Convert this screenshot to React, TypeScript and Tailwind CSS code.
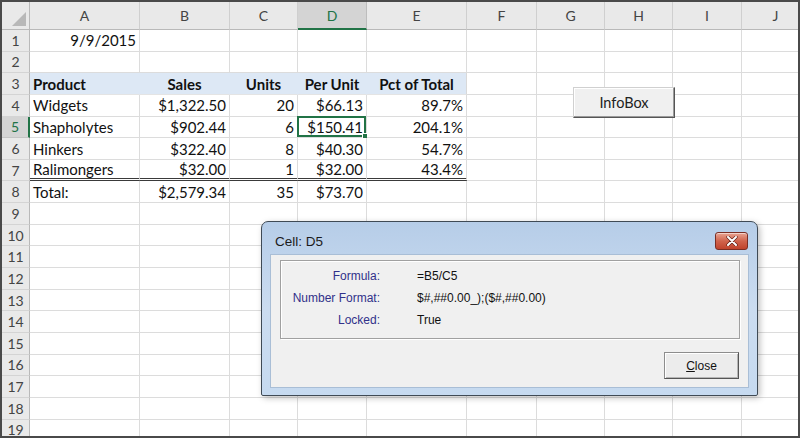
import React from "react";

type Cell = { t: string; right?: boolean; center?: boolean; bold?: boolean };

const cols = ["A", "B", "C", "D", "E", "F", "G", "H", "I", "J"];

const data: Record<number, Record<string, Cell>> = {
  1: { A: { t: "9/9/2015", right: true } },
  3: {
    A: { t: "Product", bold: true },
    B: { t: "Sales", bold: true, center: true },
    C: { t: "Units", bold: true, center: true },
    D: { t: "Per Unit", bold: true, center: true },
    E: { t: "Pct of Total", bold: true, center: true },
  },
  4: {
    A: { t: "Widgets" },
    B: { t: "$1,322.50", right: true },
    C: { t: "20", right: true },
    D: { t: "$66.13", right: true },
    E: { t: "89.7%", right: true },
  },
  5: {
    A: { t: "Shapholytes" },
    B: { t: "$902.44", right: true },
    C: { t: "6", right: true },
    D: { t: "$150.41", right: true },
    E: { t: "204.1%", right: true },
  },
  6: {
    A: { t: "Hinkers" },
    B: { t: "$322.40", right: true },
    C: { t: "8", right: true },
    D: { t: "$40.30", right: true },
    E: { t: "54.7%", right: true },
  },
  7: {
    A: { t: "Ralimongers" },
    B: { t: "$32.00", right: true },
    C: { t: "1", right: true },
    D: { t: "$32.00", right: true },
    E: { t: "43.4%", right: true },
  },
  8: {
    A: { t: "Total:" },
    B: { t: "$2,579.34", right: true },
    C: { t: "35", right: true },
    D: { t: "$73.70", right: true },
  },
};

const rows = Array.from({ length: 19 }, (_, i) => i + 1);
const tableCols = ["A", "B", "C", "D", "E"];

function DataCell({ row, col }: { row: number; col: string }) {
  const c = data[row]?.[col];
  const inTable = tableCols.includes(col);
  const blue = row === 3 && inTable;
  const double = row === 7 && inTable;
  const selected = row === 5 && col === "D";

  let cls = "relative flex items-center px-[3px] border-r border-b whitespace-nowrap overflow-visible ";
  if (blue) {
    cls += "bg-[#dde8f5] " + (col === "E" ? "border-r-[#d9d9d9] border-b-[#e4e4e4] " : "border-r-[#dde8f5] border-b-[#e4e4e4] ");
  } else {
    cls += "bg-white border-[#dcdcdc] ";
  }
  if (double) cls += "border-b-[3px] border-b-[#3a3a3a] [border-bottom-style:double] ";
  if (c?.right) cls += "justify-end ";
  if (c?.center) cls += "justify-center ";
  if (c?.bold) cls += "font-bold ";

  return (
    <div className={cls}>
      {c && <span className="text-[15px] leading-none text-[#111] pt-[1px]">{c.t}</span>}
      {selected && (
        <div className="absolute -left-[1px] -top-[1px] right-0 bottom-0 border-2 border-[#217346] pointer-events-none">
          <div className="absolute -right-[4px] -bottom-[4px] w-[6px] h-[6px] bg-[#217346] border border-white" />
        </div>
      )}
    </div>
  );
}

function Dialog() {
  return (
    <div className="absolute left-[259px] top-[219px] w-[497px] h-[175px] rounded-t-[7px] rounded-b-[2px] border border-[#3f4a55] bg-gradient-to-b from-[#b6cde8] via-[#cbdcf0] to-[#c6daf0] shadow-[2px_2px_6px_rgba(0,0,0,0.25)] font-['Liberation_Sans',sans-serif]">
      <div className="h-[32px] flex items-start justify-between pl-[13px] pr-[9px]">
        <span className="mt-[10px] text-[13.5px] text-[#1b1b1b]">Cell: D5</span>
        <div className="mt-[10px] w-[33px] h-[18px] rounded-[3px] border border-[#7a2e24] bg-gradient-to-b from-[#e8a493] via-[#d0634c] to-[#c0432c] flex items-center justify-center shadow-[inset_0_1px_0_rgba(255,255,255,0.5)]">
          <svg width="12" height="10" viewBox="0 0 12 10">
            <path d="M2 1 L10 9 M10 1 L2 9" stroke="#5a1a12" strokeWidth="3.2" strokeLinecap="round" />
            <path d="M2 1 L10 9 M10 1 L2 9" stroke="#ffffff" strokeWidth="2" strokeLinecap="round" />
          </svg>
        </div>
      </div>
      <div className="mx-[8px] h-[134px] bg-[#f0f0f0] border border-[#a9bed6] flex flex-col">
        <div className="ml-[9px] mt-[5px] w-[460px] h-[79px] border border-[#a0a0a0] shadow-[inset_1px_1px_0_#ffffff,1px_1px_0_#ffffff] pt-[4px] text-[12px]">
          {[
            ["Formula:", "=B5/C5"],
            ["Number Format:", "$#,##0.00_);($#,##0.00)"],
            ["Locked:", "True"],
          ].map(([l, v]) => (
            <div key={l} className="flex items-center h-[22px]">
              <span className="w-[99px] text-right text-[#31318a]">{l}</span>
              <span className="ml-[37px] text-[#111]">{v}</span>
            </div>
          ))}
        </div>
        <div className="flex justify-end pr-[9px] mt-[13px]">
          <button className="w-[75px] h-[27px] bg-[#ececec] border border-[#8d8d8d] border-r-[#555] border-b-[#555] shadow-[inset_1px_1px_0_#ffffff,inset_-1px_-1px_0_#b5b5b5] text-[12px] text-[#111]">
            <span className="underline">C</span>lose
          </button>
        </div>
      </div>
    </div>
  );
}

export default function App() {
  return (
    <div className="relative w-[800px] h-[438px] overflow-hidden border-2 border-[#4a4a4a] bg-white font-['Lato',sans-serif]">
      <div className="grid grid-cols-[28px_110px_90px_68px_69px_100px_70px_68px_68px_69px_68px] grid-rows-[28px_repeat(19,21.65px)]">
        {/* corner */}
        <div className="relative bg-[#e9e9e9] border-r border-b border-[#b9b9b9]">
          <svg className="absolute right-[3px] bottom-[3px]" width="14" height="14" viewBox="0 0 14 14">
            <polygon points="14,0 14,14 0,14" fill="#b8b8b8" />
          </svg>
        </div>
        {cols.map((c) => (
          <div
            key={c}
            className={
              c === "D"
                ? "flex items-center justify-center bg-[#d4d4d4] border-r border-[#bdbdbd] border-b-2 border-b-[#217346] text-[14px] text-[#217346]"
                : "flex items-center justify-center bg-[#e9e9e9] border-r border-b border-r-[#cfcfcf] border-b-[#b9b9b9] text-[14px] text-[#444]"
            }
          >
            {c}
          </div>
        ))}
        {rows.map((r) => (
          <React.Fragment key={r}>
            <div
              className={
                r === 5
                  ? "flex items-center justify-center bg-[#d4d4d4] border-b border-b-[#c4c4c4] border-r-2 border-r-[#217346] text-[14px] text-[#217346]"
                  : "flex items-center justify-center bg-[#e9e9e9] border-b border-r border-b-[#d4d4d4] border-r-[#b9b9b9] text-[14px] text-[#444]"
              }
            >
              {r}
            </div>
            {cols.map((c) => (
              <DataCell key={c} row={r} col={c} />
            ))}
          </React.Fragment>
        ))}
      </div>

      <button className="absolute left-[571px] top-[85px] w-[102px] h-[31px] bg-[#f0f0f0] border border-[#d0d0d0] border-r-[#555] border-b-[#555] shadow-[inset_-1px_-1px_0_#9a9a9a,inset_1px_1px_0_#ffffff] text-[14.5px] text-[#222] font-['Lato',sans-serif]">
        InfoBox
      </button>

      <Dialog />
    </div>
  );
}
